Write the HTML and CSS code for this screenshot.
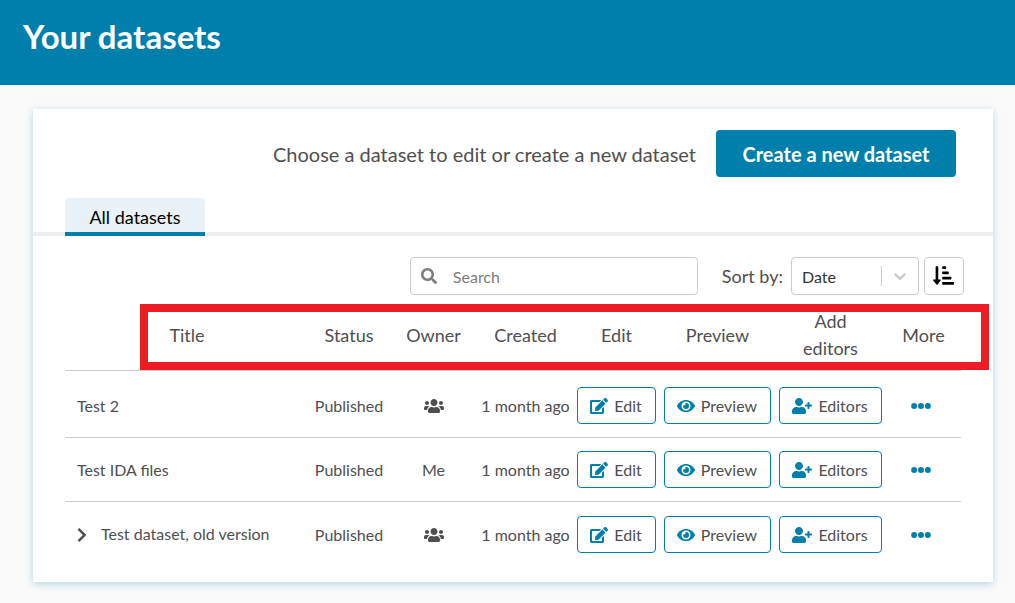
FILE: index.html
```html
<!DOCTYPE html>
<html lang="en">
<head>
<meta charset="utf-8">
<title>Your datasets</title>
<link rel="stylesheet" href="styles.css">
</head>
<body>
<svg class="sprite" aria-hidden="true">
  <symbol id="i-search" viewBox="0 0 512 512"><path d="M505 442.7L405.3 343c-4.5-4.5-10.6-7-17-7H372c27.6-35.3 44-79.7 44-128C416 93.1 322.9 0 208 0S0 93.1 0 208s93.1 208 208 208c48.3 0 92.7-16.4 128-44v16.3c0 6.4 2.5 12.5 7 17l99.7 99.7c9.4 9.4 24.6 9.4 33.9 0l28.3-28.3c9.4-9.4 9.4-24.6.1-34zM208 336c-70.7 0-128-57.2-128-128 0-70.7 57.2-128 128-128 70.7 0 128 57.2 128 128 0 70.7-57.2 128-128 128z"/></symbol>
  <symbol id="i-users" viewBox="0 0 640 512"><path d="M96 224c35.3 0 64-28.7 64-64s-28.7-64-64-64-64 28.7-64 64 28.7 64 64 64zm448 0c35.3 0 64-28.7 64-64s-28.7-64-64-64-64 28.7-64 64 28.7 64 64 64zm32 32h-64c-17.6 0-33.5 7.1-45.1 18.6 40.3 22.1 68.9 62 75.1 109.4h66c17.7 0 32-14.3 32-32v-32c0-35.3-28.7-64-64-64zm-256 0c61.9 0 112-50.1 112-112S381.9 32 320 32 208 82.1 208 144s50.1 112 112 112zm76.8 32h-8.3c-20.8 10-43.9 16-68.5 16s-47.6-6-68.5-16h-8.3C179.6 288 128 339.6 128 403.2V432c0 26.5 21.5 48 48 48h288c26.5 0 48-21.5 48-48v-28.8c0-63.6-51.6-115.2-115.2-115.2zm-223.7-13.4C161.5 263.1 145.6 256 128 256H64c-35.3 0-64 28.7-64 64v32c0 17.7 14.3 32 32 32h65.9c6.3-47.4 34.9-87.3 75.2-109.4z"/></symbol>
  <symbol id="i-edit" viewBox="0 0 576 512"><path d="M402.6 83.2l90.2 90.2c3.8 3.8 3.8 10 0 13.8L274.4 405.6l-92.8 10.3c-12.4 1.4-22.9-9.1-21.5-21.5l10.3-92.8L388.8 83.2c3.8-3.8 10-3.8 13.8 0zm162-22.9l-48.8-48.8c-15.2-15.2-39.9-15.2-55.2 0l-35.4 35.4c-3.8 3.8-3.8 10 0 13.8l90.2 90.2c3.8 3.8 10 3.8 13.8 0l35.4-35.4c15.2-15.3 15.2-40 0-55.2zM384 346.2V448H64V128h229.8c3.2 0 6.2-1.3 8.5-3.5l40-40c7.6-7.6 2.2-20.5-8.5-20.5H48C21.5 64 0 85.5 0 112v352c0 26.5 21.5 48 48 48h352c26.5 0 48-21.5 48-48V306.2c0-10.7-12.9-16-20.5-8.5l-40 40c-2.2 2.3-3.5 5.3-3.5 8.5z"/></symbol>
  <symbol id="i-eye" viewBox="0 0 576 512"><path d="M572.52 241.4C518.29 135.59 410.93 64 288 64S57.68 135.64 3.48 241.41a32.35 32.35 0 0 0 0 29.19C57.71 376.41 165.07 448 288 448s230.32-71.64 284.52-177.41a32.35 32.35 0 0 0 0-29.19zM288 400a144 144 0 1 1 144-144 143.93 143.93 0 0 1-144 144zm0-240a95.31 95.31 0 0 0-25.31 3.79 47.85 47.85 0 0 1-66.9 66.9A95.78 95.78 0 1 0 288 160z"/></symbol>
  <symbol id="i-user-plus" viewBox="0 0 640 512"><path d="M624 208h-64v-64c0-8.8-7.2-16-16-16h-32c-8.8 0-16 7.2-16 16v64h-64c-8.8 0-16 7.2-16 16v32c0 8.8 7.2 16 16 16h64v64c0 8.8 7.2 16 16 16h32c8.8 0 16-7.2 16-16v-64h64c8.8 0 16-7.2 16-16v-32c0-8.8-7.2-16-16-16zm-400 48c70.7 0 128-57.3 128-128S294.7 0 224 0 96 57.3 96 128s57.3 128 128 128zm89.6 32h-16.7c-22.2 10.2-46.9 16-72.9 16s-50.6-5.8-72.9-16h-16.7C60.2 288 0 348.2 0 422.4V464c0 26.5 21.5 48 48 48h352c26.5 0 48-21.5 48-48v-41.6c0-74.2-60.2-134.4-134.4-134.4z"/></symbol>
  <symbol id="i-dots" viewBox="0 0 512 512"><circle cx="80" cy="256" r="76"/><circle cx="256" cy="256" r="76"/><circle cx="432" cy="256" r="76"/></symbol>
  <symbol id="i-right" viewBox="0 0 320 512"><path d="M285.476 272.971L91.132 467.314c-9.373 9.373-24.569 9.373-33.941 0l-22.667-22.667c-9.357-9.357-9.375-24.522-.04-33.901L188.505 256 34.484 101.255c-9.335-9.379-9.317-24.544.04-33.901l22.667-22.667c9.373-9.373 24.569-9.373 33.941 0L285.475 239.03c9.373 9.372 9.373 24.568.001 33.941z"/></symbol>
  <symbol id="i-down" viewBox="0 0 20 20"><path d="M4.516 7.548c0.436-0.446 1.043-0.481 1.576 0l3.908 3.747 3.908-3.747c0.533-0.481 1.141-0.446 1.574 0 0.436 0.445 0.408 1.197 0 1.615-0.406 0.418-4.695 4.502-4.695 4.502-0.217 0.223-0.502 0.335-0.787 0.335s-0.57-0.112-0.789-0.335c0 0-4.287-4.084-4.695-4.502s-0.436-1.17 0-1.615z"/></symbol>
  <symbol id="i-sort" viewBox="0 0 512 512"><path d="M240 96h64a16 16 0 0 0 16-16V48a16 16 0 0 0-16-16h-64a16 16 0 0 0-16 16v32a16 16 0 0 0 16 16zm0 128h128a16 16 0 0 0 16-16v-32a16 16 0 0 0-16-16H240a16 16 0 0 0-16 16v32a16 16 0 0 0 16 16zm256 192H240a16 16 0 0 0-16 16v32a16 16 0 0 0 16 16h256a16 16 0 0 0 16-16v-32a16 16 0 0 0-16-16zm-256-64h192a16 16 0 0 0 16-16v-32a16 16 0 0 0-16-16H240a16 16 0 0 0-16 16v32a16 16 0 0 0 16 16zm-64 0h-48V48a16 16 0 0 0-16-16H80a16 16 0 0 0-16 16v304H16c-14.19 0-21.37 17.24-11.29 27.31l80 96a16 16 0 0 0 22.62 0l80-96C197.35 369.26 190.22 352 176 352z"/></symbol>
</svg>

<header class="page-header"><h1>Your datasets</h1></header>

<main class="card">
  <div class="intro">
    <p>Choose a dataset to edit or create a new dataset</p>
    <button type="button" class="create">Create a new dataset</button>
  </div>

  <div class="tabs" role="tablist">
    <button type="button" class="tab" role="tab" aria-selected="true">All datasets</button>
  </div>

  <div class="toolbar">
    <label class="search">
      <svg class="icon icon-16"><use href="#i-search"/></svg>
      <input type="search" placeholder="Search" aria-label="Search">
    </label>
    <label class="sort-label" for="sort">Sort by:</label>
    <div class="select">
      <select id="sort"><option>Date</option><option>Title</option></select>
      <span class="select-arrow"><svg class="icon icon-20"><use href="#i-down"/></svg></span>
    </div>
    <button type="button" class="sort-order" aria-label="Sort order"><svg class="icon icon-21"><use href="#i-sort"/></svg></button>
  </div>

  <div class="table-wrap">
    <table class="datasets">
      <colgroup>
        <col><col class="c-status"><col class="c-owner"><col class="c-created"><col class="c-edit"><col class="c-preview"><col class="c-editors"><col class="c-more">
      </colgroup>
      <thead>
        <tr><th scope="col">Title</th><th scope="col">Status</th><th scope="col">Owner</th><th scope="col">Created</th><th scope="col">Edit</th><th scope="col">Preview</th><th scope="col">Add<br>editors</th><th scope="col">More</th></tr>
      </thead>
      <tbody>
        <tr>
          <td class="title">Test 2</td><td>Published</td>
          <td><svg class="icon icon-wide" role="img" aria-label="Project"><use href="#i-users"/></svg></td>
          <td>1 month ago</td>
          <td><button type="button" class="action"><svg class="icon icon-18"><use href="#i-edit"/></svg>Edit</button></td>
          <td><button type="button" class="action"><svg class="icon icon-18"><use href="#i-eye"/></svg>Preview</button></td>
          <td><button type="button" class="action"><svg class="icon icon-wide"><use href="#i-user-plus"/></svg>Editors</button></td>
          <td><button type="button" class="more" aria-label="More"><svg class="icon icon-20"><use href="#i-dots"/></svg></button></td>
        </tr>
        <tr>
          <td class="title">Test IDA files</td><td>Published</td>
          <td>Me</td>
          <td>1 month ago</td>
          <td><button type="button" class="action"><svg class="icon icon-18"><use href="#i-edit"/></svg>Edit</button></td>
          <td><button type="button" class="action"><svg class="icon icon-18"><use href="#i-eye"/></svg>Preview</button></td>
          <td><button type="button" class="action"><svg class="icon icon-wide"><use href="#i-user-plus"/></svg>Editors</button></td>
          <td><button type="button" class="more" aria-label="More"><svg class="icon icon-20"><use href="#i-dots"/></svg></button></td>
        </tr>
        <tr>
          <td class="title"><button type="button" class="expand" aria-label="Show versions"><svg class="icon icon-narrow"><use href="#i-right"/></svg></button>Test dataset, old version</td><td>Published</td>
          <td><svg class="icon icon-wide" role="img" aria-label="Project"><use href="#i-users"/></svg></td>
          <td>1 month ago</td>
          <td><button type="button" class="action"><svg class="icon icon-18"><use href="#i-edit"/></svg>Edit</button></td>
          <td><button type="button" class="action"><svg class="icon icon-18"><use href="#i-eye"/></svg>Preview</button></td>
          <td><button type="button" class="action"><svg class="icon icon-wide"><use href="#i-user-plus"/></svg>Editors</button></td>
          <td><button type="button" class="more" aria-label="More"><svg class="icon icon-20"><use href="#i-dots"/></svg></button></td>
        </tr>
      </tbody>
    </table>
    <div class="highlight" aria-hidden="true"></div>
  </div>
</main>
</body>
</html>
```

FILE: styles.css
```css
* { box-sizing: border-box; }

body {
  margin: 0;
  background: #fafafa;
  color: #4f4f4f;
  font: 16px/24px Lato, "Liberation Sans", sans-serif;
}

button, input, select { font: inherit; color: inherit; }
button { cursor: pointer; }

.sprite { position: absolute; width: 0; height: 0; }
.icon { display: inline-block; flex: none; fill: currentColor; vertical-align: middle; }
.icon-16 { width: 16px; height: 16px; }
.icon-18 { width: 18px; height: 16px; }
.icon-20 { width: 20px; height: 20px; }
.icon-21 { width: 21px; height: 21px; }
.icon-wide { width: 20px; height: 16px; }
.icon-narrow { width: 10px; height: 16px; }

.page-header {
  padding: 16px 23px 29px;
  background: #007fad;
  color: #fff;
}
.page-header h1 { margin: 0; font-size: 33px; line-height: 40px; font-weight: 700; }

.card {
  margin: 24px 22px 21px 33px;
  padding-bottom: 17px;
  background: #fff;
  box-shadow: 0 2px 8px rgba(0, 127, 173, 0.28);
}

.intro {
  display: flex;
  justify-content: flex-end;
  align-items: center;
  gap: 20px;
  padding: 21px 37px 21px 32px;
  font-size: 20px;
}
.intro p { margin: 0; }
.create {
  min-width: 240px;
  padding: 11px 26px 10px;
  border: 0;
  border-radius: 4px;
  background: #007fad;
  color: #fff;
  font-weight: 700;
  line-height: 26px;
}

.tabs {
  padding: 0 32px;
  background: linear-gradient(#eee, #eee) bottom / 100% 4px no-repeat;
  display: flex;
}
.tab {
  min-width: 140px;
  padding: 7px 24px 3px;
  border: 0;
  border-bottom: 4px solid #007fad;
  border-radius: 4px 4px 0 0;
  background: #e8f2f8;
  color: #000;
  font-size: 18px;
}

.toolbar {
  display: flex;
  justify-content: flex-end;
  align-items: center;
  padding: 21px 29px 9px 32px;
}
.search {
  display: flex;
  align-items: center;
  gap: 16px;
  width: 288px;
  height: 38px;
  padding: 0 10px;
  border: 1px solid #ccc;
  border-radius: 4px;
  color: #7d7d7d;
}
.search input {
  flex: 1;
  min-width: 0;
  padding: 2px 0 0;
  border: 0;
  outline: 0;
  background: none;
  appearance: none;
}
.search input::placeholder { color: #7d7d7d; opacity: 1; }
.sort-label { margin: 0 8px 0 24px; font-size: 18px; }
.select { display: grid; width: 128px; height: 38px; }
.select select {
  grid-area: 1 / 1;
  padding: 2px 10px 0;
  border: 1px solid #ccc;
  border-radius: 4px;
  background: #fff;
  color: #333;
  appearance: none;
}
.select-arrow {
  grid-area: 1 / 1;
  place-self: center end;
  display: flex;
  height: 20px;
  padding: 0 9px 0 8px;
  border-left: 1px solid #ccc;
  color: #ccc;
  pointer-events: none;
}
.sort-order {
  display: grid;
  place-items: center;
  width: 40px;
  height: 38px;
  margin-left: 5px;
  padding: 0 2px 2px 0;
  border: 1px solid #ccc;
  border-radius: 4px;
  background: #fff;
  color: #000;
}

.table-wrap { position: relative; margin: 0 32px; }
.datasets { width: 100%; table-layout: fixed; border-collapse: separate; border-spacing: 0; }
.c-status { width: 80px; }
.c-owner { width: 89px; }
.c-created { width: 95px; }
.c-edit { width: 87px; }
.c-preview { width: 115px; }
.c-editors { width: 111px; }
.c-more { width: 75px; }

.datasets th {
  padding: 4px 0 8px;
  border-bottom: 1px solid #ccc;
  font-size: 18px;
  line-height: 27px;
  font-weight: 400;
}
.datasets td {
  padding: 13px 0;
  border-bottom: 1px solid #ccc;
  text-align: center;
  white-space: nowrap;
}
.datasets tbody tr:first-child td { padding-top: 16px; }
.datasets tbody tr:last-child td { padding-top: 14px; padding-bottom: 12px; border-bottom: 0; }
.datasets .title { padding-left: 12px; text-align: left; }
.datasets td > .icon { margin-bottom: 2px; }

.action {
  display: inline-flex;
  align-items: center;
  gap: 6px;
  height: 37px;
  padding: 0 13px 0 12px;
  border: 1px solid #007fad;
  border-radius: 4px;
  background: #fff;
  vertical-align: top;
}
.action .icon { color: #007fad; }
.more {
  padding: 0 6px 3px 0;
  border: 0;
  background: none;
  color: #007fad;
  line-height: 20px;
}
.expand {
  width: 24px;
  padding: 0 0 2px;
  border: 0;
  background: none;
  text-align: left;
}

/* Call-out frame around the column headings */
.highlight {
  position: absolute;
  top: 0;
  left: 75px;
  right: -28px;
  height: 66px;
  border: 8px solid #ed1c24;
  pointer-events: none;
}
```
